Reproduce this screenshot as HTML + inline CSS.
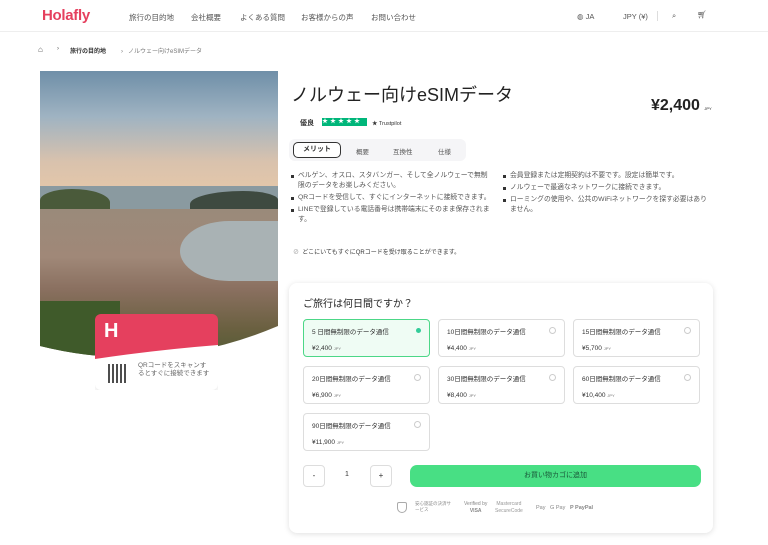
<!DOCTYPE html><html><head><meta charset="utf-8"><style>
*{margin:0;padding:0;box-sizing:border-box}
body{width:768px;height:545px;background:#fff;font-family:"Liberation Sans","Noto Sans CJK JP",sans-serif;color:#333;position:relative;overflow:hidden}
.a{position:absolute}
.nav{font-size:7.5px;color:#555}
.opt{position:absolute;width:127px;height:38px;border:1px solid #ddd;border-radius:4px;background:#fff}
.opt .t{position:absolute;left:8px;top:6px;font-size:6.5px;color:#333}
.opt .p{position:absolute;left:8px;top:25px;font-size:6.5px;color:#333}
.opt .p small{font-size:4px;color:#777}
.opt .r{position:absolute;right:8px;top:7px;width:7px;height:7px;border:1px solid #ccc;border-radius:50%}
.bl{font-size:6.8px;color:#555;line-height:10px;position:relative;padding-left:7px;margin-bottom:2px}
.bl:before{content:"";position:absolute;left:0;top:4px;width:2.5px;height:2.5px;background:#333}
</style></head><body>
<div class="a" style="left:42px;top:7px;font-size:15px;color:#e5405e;font-weight:bold;letter-spacing:-0.3px">Holafly</div>
<div class="a nav" style="left:129px;top:12px">旅行の目的地</div>
<div class="a nav" style="left:191px;top:12px">会社概要</div>
<div class="a nav" style="left:240px;top:12px">よくある質問</div>
<div class="a nav" style="left:301px;top:12px">お客様からの声</div>
<div class="a nav" style="left:371px;top:12px">お問い合わせ</div>
<div class="a nav" style="left:577px;top:12px">◍ JA</div>
<div class="a nav" style="left:623px;top:12px">JPY (¥)</div>
<div class="a" style="left:657px;top:11px;width:1px;height:10px;background:#ddd"></div>
<div class="a nav" style="left:672px;top:11px">⌕</div>
<div class="a nav" style="left:697px;top:10px">🛒︎</div>
<div class="a" style="left:0;top:31px;width:768px;height:1px;background:#eee"></div>
<div class="a" style="left:38px;top:45px;font-size:8px;color:#555">⌂</div>
<div class="a" style="left:57px;top:46px;font-size:6px;color:#555">›</div>
<div class="a" style="left:70px;top:46px;font-size:6px;color:#333;font-weight:bold">旅行の目的地</div>
<div class="a" style="left:121px;top:46px;font-size:6px;color:#777">›&nbsp;&nbsp; ノルウェー向けeSIMデータ</div>
<!-- image -->
<div class="a" style="left:40px;top:71px;width:238px;height:290px;overflow:hidden;clip-path:path('M0 0 H238 V255 Q120 305 0 275 Z')">
<div class="a" style="left:0;top:0;width:238px;height:130px;background:linear-gradient(180deg,#6f8fa8 0%,#9fb3c2 35%,#d9c2ad 70%,#e8c9a8 100%)"></div>
<div class="a" style="left:0;top:115px;width:238px;height:40px;background:#8a9aa0"></div>
<div class="a" style="left:0;top:118px;width:70px;height:25px;background:#4a5a3a;border-radius:50% 60% 0 0"></div>
<div class="a" style="left:150px;top:120px;width:88px;height:22px;background:#3e4a40;border-radius:60% 40% 0 0"></div>
<div class="a" style="left:0;top:138px;width:238px;height:160px;background:linear-gradient(180deg,#9a8a7a 0%,#a08878 30%,#8a7060 50%,#6a6040 75%,#4a5a30 100%)"></div>
<div class="a" style="left:140px;top:150px;width:98px;height:60px;background:#a9b2b4;border-radius:50% 0 0 50%"></div>
<div class="a" style="left:0;top:230px;width:80px;height:60px;background:#3f5a2a"></div>
</div>
<div class="a" style="left:95px;top:314px;width:123px;height:45px;background:#e5405e;border-radius:6px 6px 0 0"></div>
<div class="a" style="left:104px;top:320px;font-size:20px;color:#fff;font-weight:bold">H</div>
<div class="a" style="left:95px;top:345px;width:123px;height:45px;background:#fff;border-radius:0 0 6px 6px;clip-path:path('M0 14 Q60 5 123 0 V45 H0 Z');box-shadow:0 2px 6px rgba(0,0,0,.1)"></div>
<div class="a" style="left:108px;top:364px;width:19px;height:19px;background:repeating-linear-gradient(90deg,#222 0 2px,#fff 2px 4px),#222;opacity:.8"></div>
<div class="a" style="left:138px;top:362px;font-size:6.5px;color:#666;line-height:8px;width:72px">QRコードをスキャンするとすぐに接続できます</div>
<!-- right -->
<div class="a" style="left:291px;top:81px;font-size:18px;color:#222">ノルウェー向けeSIMデータ</div>
<div class="a" style="left:651px;top:97px;font-size:16px;font-weight:bold;color:#222">¥2,400 <span style="font-size:4px;font-weight:normal">JPY</span></div>
<div class="a" style="left:300px;top:118px;font-size:7px;font-weight:bold">優良</div>
<div class="a" style="left:322px;top:118px;width:45px;height:8px;background:#00b67a;color:#fff;font-size:6px;letter-spacing:2px;line-height:8px">★★★★★</div>
<div class="a" style="left:372px;top:119px;font-size:5.5px">★ Trustpilot</div>
<div class="a" style="left:289px;top:139px;width:177px;height:22px;background:#f5f5f7;border-radius:6px"></div>
<div class="a" style="left:293px;top:142px;width:48px;height:16px;border:1px solid #333;border-radius:5px;background:#fff;font-size:7px;font-weight:bold;text-align:center;line-height:14px">メリット</div>
<div class="a" style="left:356px;top:146px;font-size:6.5px;color:#555">概要</div>
<div class="a" style="left:393px;top:146px;font-size:6.5px;color:#555">互換性</div>
<div class="a" style="left:438px;top:146px;font-size:6.5px;color:#555">仕様</div>
<div class="a" style="left:291px;top:171px;width:200px">
<div class="bl">ベルゲン、オスロ、スタバンガー、そして全ノルウェーで無制限のデータをお楽しみください。</div>
<div class="bl">QRコードを受信して、すぐにインターネットに接続できます。</div>
<div class="bl">LINEで登録している電話番号は携帯端末にそのまま保存されます。</div></div>
<div class="a" style="left:503px;top:171px;width:206px">
<div class="bl">会員登録または定期契約は不要です。設定は簡単です。</div>
<div class="bl">ノルウェーで最適なネットワークに接続できます。</div>
<div class="bl">ローミングの使用や、公共のWiFiネットワークを探す必要はありません。</div></div>
<div class="a" style="left:293px;top:247px;font-size:6px;color:#333"><span style="color:#999">⊘</span>&nbsp; どこにいてもすぐにQRコードを受け取ることができます。</div>
<!-- card -->
<div class="a" style="left:289px;top:283px;width:424px;height:250px;border-radius:8px;box-shadow:0 1px 6px rgba(0,0,0,.13);background:#fff"></div>
<div class="a" style="left:303px;top:295px;font-size:10px;color:#222">ご旅行は何日間ですか？</div>
<div class="opt" style="left:303px;top:319px;background:#effcf4;border-color:#4cd787"><div class="t">5 日間無制限のデータ通信</div><div class="r" style="border:none;width:5px;height:5px;background:#3c9;top:8px"></div><div class="p">¥2,400 <small>JPY</small></div></div>
<div class="opt" style="left:438px;top:319px"><div class="t">10日間無制限のデータ通信</div><div class="r"></div><div class="p">¥4,400 <small>JPY</small></div></div>
<div class="opt" style="left:573px;top:319px"><div class="t">15日間無制限のデータ通信</div><div class="r"></div><div class="p">¥5,700 <small>JPY</small></div></div>
<div class="opt" style="left:303px;top:366px"><div class="t">20日間無制限のデータ通信</div><div class="r"></div><div class="p">¥6,900 <small>JPY</small></div></div>
<div class="opt" style="left:438px;top:366px"><div class="t">30日間無制限のデータ通信</div><div class="r"></div><div class="p">¥8,400 <small>JPY</small></div></div>
<div class="opt" style="left:573px;top:366px"><div class="t">60日間無制限のデータ通信</div><div class="r"></div><div class="p">¥10,400 <small>JPY</small></div></div>
<div class="opt" style="left:303px;top:413px"><div class="t">90日間無制限のデータ通信</div><div class="r"></div><div class="p">¥11,900 <small>JPY</small></div></div>
<div class="a" style="left:303px;top:465px;width:22px;height:22px;border:1px solid #ddd;border-radius:4px;font-size:8px;text-align:center;line-height:20px">-</div>
<div class="a" style="left:345px;top:471px;font-size:7px">1</div>
<div class="a" style="left:370px;top:465px;width:22px;height:22px;border:1px solid #ddd;border-radius:4px;font-size:8px;text-align:center;line-height:20px">+</div>
<div class="a" style="left:410px;top:465px;width:291px;height:22px;background:#48df84;border-radius:7px;font-size:7px;color:#1a5a3a;text-align:center;line-height:22px">お買い物カゴに追加</div>
<div class="a" style="left:397px;top:502px;width:10px;height:11px;border:1px solid #aaa;border-radius:2px 2px 5px 5px"></div>
<div class="a" style="left:415px;top:501px;font-size:4.5px;color:#888;line-height:6px">安心認証の決済サ<br>ービス</div>
<div class="a" style="left:464px;top:501px;font-size:5px;color:#888;line-height:7px;text-align:center">Verified by<br><b>VISA</b></div>
<div class="a" style="left:495px;top:501px;font-size:5px;color:#999;line-height:7px;text-align:center">Mastercard<br>SecureCode</div>
<div class="a" style="left:536px;top:505px;font-size:5.5px;color:#888"> Pay&nbsp;&nbsp; G Pay&nbsp;&nbsp; <b>P PayPal</b></div>
</body></html>
